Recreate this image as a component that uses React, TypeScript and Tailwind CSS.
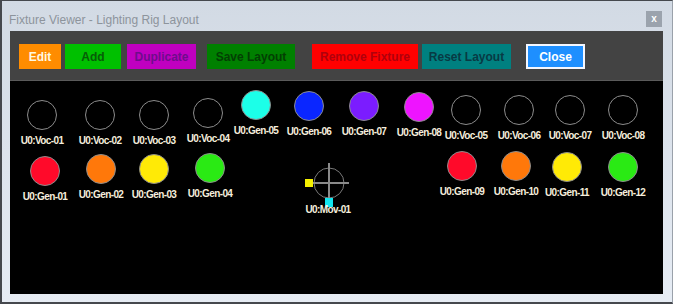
type Fixture = {
  name: string
  x: number
  y: number
  color?: string
}

// positions are canvas coordinates (left/top of the 30px lamp)
const fixtures: Fixture[] = [
  { name: 'U0:Voc-01', x: 17, y: 19 },
  { name: 'U0:Voc-02', x: 75, y: 19 },
  { name: 'U0:Voc-03', x: 129, y: 19 },
  { name: 'U0:Voc-04', x: 183, y: 17 },
  { name: 'U0:Gen-05', x: 231, y: 9, color: '#1cffe8' },
  { name: 'U0:Gen-06', x: 284, y: 10, color: '#0a26ff' },
  { name: 'U0:Gen-07', x: 339, y: 10, color: '#7b1cff' },
  { name: 'U0:Gen-08', x: 394, y: 11, color: '#ee14ff' },
  { name: 'U0:Voc-05', x: 441, y: 14 },
  { name: 'U0:Voc-06', x: 494, y: 14 },
  { name: 'U0:Voc-07', x: 545, y: 14 },
  { name: 'U0:Voc-08', x: 598, y: 14 },
  { name: 'U0:Gen-01', x: 20, y: 75, color: '#ff0a2a' },
  { name: 'U0:Gen-02', x: 76, y: 73, color: '#ff780a' },
  { name: 'U0:Gen-03', x: 129, y: 73, color: '#ffea06' },
  { name: 'U0:Gen-04', x: 185, y: 72, color: '#2aea14' },
  { name: 'U0:Gen-09', x: 437, y: 70, color: '#ff0a2a' },
  { name: 'U0:Gen-10', x: 491, y: 70, color: '#ff780a' },
  { name: 'U0:Gen-11', x: 542, y: 71, color: '#ffea06' },
  { name: 'U0:Gen-12', x: 598, y: 71, color: '#2aea14' },
]

const labelCls =
  'whitespace-nowrap text-[10px] font-bold leading-[12px] tracking-[-0.6px] text-[#f5eedd]'

function Lamp({ fixture }: { fixture: Fixture }) {
  return (
    <div
      className="absolute flex w-[30px] flex-col items-center"
      style={{ left: fixture.x, top: fixture.y }}
    >
      <div
        className="h-[30px] w-[30px] shrink-0 rounded-full border border-[#8c8c8c]"
        style={{ backgroundColor: fixture.color ?? 'transparent' }}
      />
      <div className={`mt-[5px] ${labelCls}`}>{fixture.name}</div>
    </div>
  )
}

function MovingHead() {
  return (
    <div className="absolute left-[290px] top-[79px] h-[56px] w-[60px]">
      <svg width="60" height="48" viewBox="0 0 60 48" className="block">
        <circle cx="29" cy="23" r="15" fill="none" stroke="#7a7a7a" strokeWidth="1" />
        <line x1="13" y1="23" x2="49" y2="23" stroke="#8a8a8a" strokeWidth="2" />
        <line x1="29" y1="3" x2="29" y2="38" stroke="#8a8a8a" strokeWidth="2" />
        <rect x="5" y="19" width="8" height="8" fill="#f5f000" />
        <rect x="25" y="38" width="8" height="9" fill="#12e6f0" />
      </svg>
      <div className={`absolute left-[28px] top-[44px] -translate-x-1/2 ${labelCls}`}>
        U0:Mov-01
      </div>
    </div>
  )
}

const buttons = [
  { label: 'Edit', cls: 'w-[42px] bg-[#ff8c00] text-[#fff8e0]' },
  { label: 'Add', cls: 'ml-[4px] w-[56px] bg-[#00c000] text-[#075d07]' },
  { label: 'Duplicate', cls: 'ml-[6px] w-[69px] bg-[#c000c0] text-[#6e0c8c]' },
  { label: 'Save Layout', cls: 'ml-[11px] w-[88px] bg-[#008000] text-[#033f03]' },
  { label: 'Remove Fixture', cls: 'ml-[17px] w-[106px] bg-[#ff0000] text-[#b0000c]' },
  { label: 'Reset Layout', cls: 'ml-[4px] w-[89px] bg-[#008080] text-[#083a44]' },
  { label: 'Close', cls: 'ml-[15px] w-[59px] border-2 border-[#f4f7ff] bg-[#1e8fff] text-white' },
]

export default function App() {
  return (
    <div className='flex h-[304px] w-[673px] flex-col border-b-2 border-l-2 border-r border-t border-[#45484d] border-r-[#9aa1aa] bg-gradient-to-b from-[#d2dae4] to-[#e6ecf4] [font-family:"Liberation_Sans",Arial,sans-serif]'>
      <div className="flex h-[30px] shrink-0 items-start justify-between pl-[7px] pr-[10px]">
        <div className="mt-[12px] text-[12px] leading-[14px] text-[#8d949c]">
          Fixture Viewer - Lighting Rig Layout
        </div>
        <div className="mt-[10px] flex h-[16px] w-[16px] items-center justify-center bg-[#9ba3ad] text-[10px] font-bold leading-none text-white">
          x
        </div>
      </div>

      <div className="ml-[8px] mr-[9px] flex flex-col">
        <div className="flex h-[50px] items-start border-b border-[#5a5a5a] bg-[#434343] pl-[9px] pt-[13px]">
          {buttons.map((b) => (
            <div
              key={b.label}
              className={`flex h-[25px] shrink-0 items-center justify-center whitespace-nowrap text-[12px] font-bold ${b.cls}`}
            >
              {b.label}
            </div>
          ))}
        </div>
        <div className="relative h-[213px] overflow-hidden bg-black">
          {fixtures.map((f) => (
            <Lamp key={f.name} fixture={f} />
          ))}
          <MovingHead />
        </div>
      </div>
    </div>
  )
}
